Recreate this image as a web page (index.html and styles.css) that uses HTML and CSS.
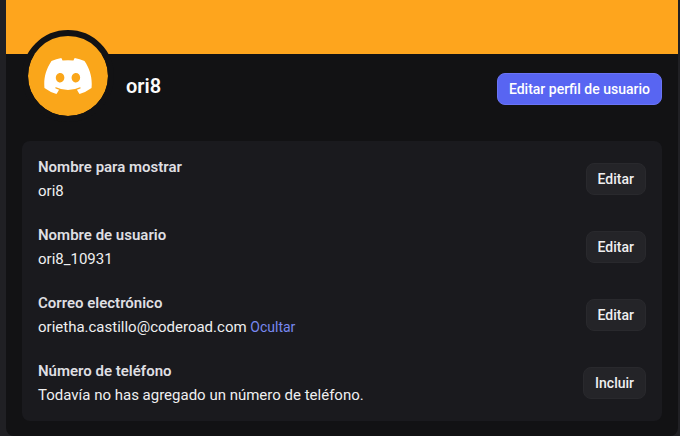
FILE: index.html
```html
<!DOCTYPE html>
<html lang="es">
    <head>
        <title>Mi cuenta</title>
        <meta charset="UTF-8">
        <link rel="stylesheet" href="styles.css">
    </head>
    <body>
        <main class="perfil">
            <div class="banner"></div>
            <div class="cabecera">
                <div class="avatar">
                    <svg viewBox="0 0 127.14 96.36" role="img" aria-label="Discord">
                        <path fill="#fff" d="M107.7,8.07A105.15,105.15,0,0,0,81.47,0a72.06,72.06,0,0,0-3.36,6.83A97.68,97.68,0,0,0,49,6.83,72.37,72.37,0,0,0,45.64,0,105.89,105.89,0,0,0,19.39,8.09C2.79,32.65-1.71,56.6.54,80.21h0A105.73,105.73,0,0,0,32.71,96.36,77.7,77.7,0,0,0,39.6,85.25a68.42,68.42,0,0,1-10.85-5.18c.91-.66,1.8-1.34,2.66-2a75.57,75.57,0,0,0,64.32,0c.87.71,1.76,1.39,2.66,2a68.68,68.68,0,0,1-10.87,5.19,77,77,0,0,0,6.89,11.1A105.25,105.25,0,0,0,126.6,80.22h0C129.24,52.84,122.09,29.11,107.7,8.07ZM42.45,65.69C36.18,65.69,31,60,31,53s5-12.74,11.43-12.74S54,46,53.89,53,48.84,65.69,42.45,65.69Zm42.24,0C78.41,65.69,73.25,60,73.25,53s5-12.74,11.44-12.74S96.23,46,96.12,53,91.08,65.69,84.69,65.69Z"/>
                    </svg>
                </div>
                <h1>ori8</h1>
                <button class="boton boton-azul" type="button">Editar perfil de usuario</button>
            </div>
            <div class="datos">
                <div class="fila">
                    <div class="campo">
                        <h2>Nombre para mostrar</h2>
                        <p>ori8</p>
                    </div>
                    <button class="boton" type="button">Editar</button>
                </div>
                <div class="fila">
                    <div class="campo">
                        <h2>Nombre de usuario</h2>
                        <p>ori8_10931</p>
                    </div>
                    <button class="boton" type="button">Editar</button>
                </div>
                <div class="fila">
                    <div class="campo">
                        <h2>Correo electrónico</h2>
                        <p>orietha.castillo@coderoad.com <button class="ocultar" type="button">Ocultar</button></p>
                    </div>
                    <button class="boton" type="button">Editar</button>
                </div>
                <div class="fila">
                    <div class="campo">
                        <h2>Número de teléfono</h2>
                        <p>Todavía no has agregado un número de teléfono.</p>
                    </div>
                    <button class="boton" type="button">Incluir</button>
                </div>
            </div>
        </main>
    </body>
</html>
```
FILE: styles.css
```css
* {
    margin: 0;
    padding: 0;
    box-sizing: border-box;
    font-family: Roboto, "Noto Sans", sans-serif;
}
body {
    background-color: #202024;
    color: #dfdfe2;
    padding: 0 2px 0 6px;
}
.perfil {
    background-color: #121214;
    border-radius: 0 0 8px 8px;
    padding-bottom: 15px;
}
.banner {
    height: 54px;
    background-color: #fea51d;
}
.cabecera {
    display: flex;
    align-items: center;
    gap: 12px;
    height: 68px;
    padding: 0 16px;
    margin-bottom: 19px;
}
.avatar {
    display: flex;
    justify-content: center;
    align-items: center;
    align-self: flex-end;
    width: 92px;
    height: 92px;
    border: 6px solid #121214;
    border-radius: 50%;
    background-color: #faa61a;
    background-clip: padding-box;
}
.avatar svg {
    width: 48px;
    height: 36px;
}
.cabecera h1 {
    flex: 1;
    font-size: 20px;
    font-weight: 600;
    line-height: 24px;
    padding-bottom: 4px;
    color: #fbfbfb;
}
.datos {
    display: flex;
    flex-direction: column;
    gap: 24px;
    margin: 0 16px;
    padding: 16px;
    border-radius: 8px;
    background-color: #1a1a1e;
}
.fila {
    display: flex;
    justify-content: space-between;
    align-items: center;
}
.campo {
    display: flex;
    flex-direction: column;
    gap: 4px;
}
.campo h2 {
    font-size: 15px;
    font-weight: 600;
    line-height: 20px;
}
.campo p {
    font-size: 15px;
    line-height: 20px;
    color: #efeff0;
}
.boton {
    height: 32px;
    padding: 0 11px;
    border: 1px solid #29292d;
    border-radius: 8px;
    background-color: #242428;
    color: #efeff0;
    font-size: 14px;
    font-weight: 500;
    cursor: pointer;
}
.boton-azul {
    border-color: #6a74f5;
    background-color: #5865f2;
    color: #ffffff;
    margin-top: 2px;
}
.ocultar {
    border: none;
    background: none;
    color: #7888f0;
    font-size: 14px;
    cursor: pointer;
}
```
